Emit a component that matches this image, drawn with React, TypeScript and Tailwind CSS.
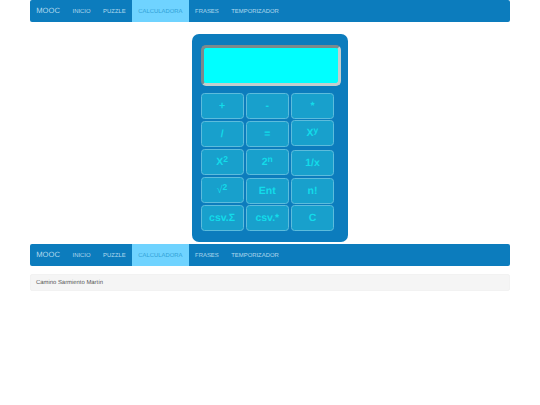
import React from "react";

const links = ["INICIO", "PUZZLE", "CALCULADORA", "FRASES", "TEMPORIZADOR"];

function Navbar() {
  return (
    <nav className="flex h-[22px] items-stretch rounded-[2px] bg-[#0c7cbd] [text-rendering:geometricPrecision]">
      <span className="flex items-center px-[6.3px] text-[7.6px] text-[#b4dbee]">MOOC</span>
      {links.map((link) => (
        <a
          key={link}
          className={
            link === "CALCULADORA"
              ? "flex items-center bg-[#6fd3ff] px-[6.3px] pt-[2px] text-[5.9px] text-[#2f9fd6]"
              : "flex items-center px-[6.3px] pt-[2px] text-[5.9px] text-[#b4dbee]"
          }
        >
          {link}
        </a>
      ))}
    </nav>
  );
}

function Key({ children, shift = "" }: { children: React.ReactNode; shift?: string }) {
  return (
    <button
      className={
        "flex h-[25.5px] w-[43px] items-center justify-center rounded-[3.5px] border border-[#5cbcdc] bg-[#18a0cc] pt-[1px] text-[10.5px] font-bold text-[#12dcea] [text-rendering:geometricPrecision] " +
        shift
      }
    >
      {children}
    </button>
  );
}

const Sup = ({ children }: { children: React.ReactNode }) => (
  <sup className="relative -top-[3.5px] align-baseline text-[8.5px] leading-none">{children}</sup>
);

function Calculator() {
  return (
    <div className="mx-auto mt-3 h-[208px] w-[156px] rounded-[7px] bg-[#0c7cbd] pt-[10.7px] pl-[8.6px]">
      <div className="h-[41px] w-[140.5px] rounded-[5px] border-[3px] border-t-[#7b8a8c] border-r-[#c4cece] border-b-[#c4cece] border-l-[#7b8a8c] bg-[#00ffff]" />
      <div className="mt-[7.5px] flex flex-col gap-[2.5px] text-center">
        <div className="flex gap-[2.2px]">
          <Key>+</Key>
          <Key>-</Key>
          <Key>*</Key>
        </div>
        <div className="flex gap-[2.2px]">
          <Key>/</Key>
          <Key>=</Key>
          <Key shift="-translate-y-[1px]">
            X<Sup>y</Sup>
          </Key>
        </div>
        <div className="flex gap-[2.2px]">
          <Key>
            X<Sup>2</Sup>
          </Key>
          <Key>
            2<Sup>n</Sup>
          </Key>
          <Key shift="translate-y-[1px]">1/x</Key>
        </div>
        <div className="flex gap-[2.2px]">
          <Key>
            <span className="font-normal">√</span>
            <Sup>2</Sup>
          </Key>
          <Key shift="translate-y-[1px]">Ent</Key>
          <Key shift="translate-y-[1px]">n!</Key>
        </div>
        <div className="flex gap-[2.2px]">
          <Key>csv.Σ</Key>
          <Key>csv.*</Key>
          <Key>C</Key>
        </div>
      </div>
    </div>
  );
}

export default function App() {
  return (
    <div className="mx-auto min-h-[405px] w-[480px] bg-white font-['Liberation_Sans',Arial,sans-serif]">
      <Navbar />
      <Calculator />
      <div className="mt-[2px]">
        <Navbar />
      </div>
      <div className="mt-2 flex h-[17px] items-center rounded-[2px] border border-[#f2f2f2] bg-[#f5f5f5] pt-[1.5px] pl-[5px] text-[5.9px] text-[#555555] [text-rendering:geometricPrecision]">
        Camino Sarmiento Martín
      </div>
    </div>
  );
}
